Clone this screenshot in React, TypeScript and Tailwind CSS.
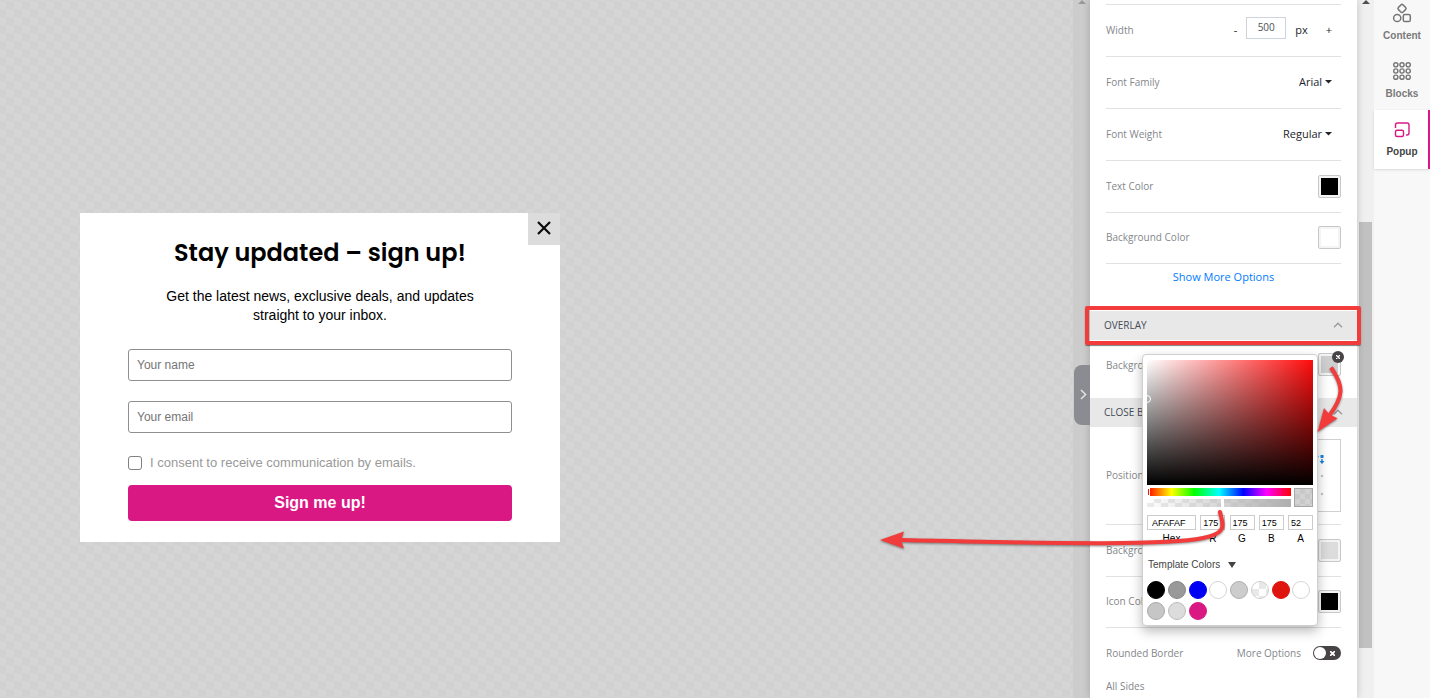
import type { ReactNode } from 'react';

const templateColors = [
  { name: 'Black', style: 'bg-black border-black' },
  { name: 'Gray', style: 'bg-[#999999] border-[#878787]' },
  { name: 'Blue', style: 'bg-[#0000f5] border-[#0000f5]' },
  { name: 'White', style: 'bg-white border-[#d5d5d5]' },
  { name: 'Light gray', style: 'bg-[#cccccc] border-[#b0b0b0]' },
  {
    name: 'Transparent',
    style:
      'bg-white bg-[repeating-conic-gradient(#e8e8e8_0_25%,#ffffff_0_50%)] bg-[length:14px_14px] border-[#cfcfcf]',
  },
  { name: 'Red', style: 'bg-[#e0140f] border-[#e0140f]' },
  { name: 'White 2', style: 'bg-white border-[#d5d5d5]' },
  { name: 'Silver', style: 'bg-[#c6c6c6] border-[#aaaaaa]' },
  { name: 'Pale gray', style: 'bg-[#dcdcdc] border-[#bcbcbc]' },
  { name: 'Pink', style: 'bg-[#da1884] border-[#da1884]' },
];

const channels = [
  { id: 'r', label: 'R', value: '175' },
  { id: 'g', label: 'G', value: '175' },
  { id: 'b', label: 'B', value: '175' },
  { id: 'a', label: 'A', value: '52' },
];

function Row({ label, height = 'h-[52px]', children }: { label: string; height?: string; children?: ReactNode }) {
  return (
    <div className={`mx-4 flex items-center justify-between border-b border-[#dfe1e3] pb-px ${height}`}>
      <span className="pb-px text-[#84878b]">{label}</span>
      {children}
    </div>
  );
}

function Swatch({ label, color }: { label: string; color: string }) {
  return (
    <button
      type="button"
      aria-label={label}
      className="size-[23px] rounded-xs border border-[#c8c8c8] bg-[#f4f4f4] p-[2px]"
    >
      <span className={`block size-full ${color}`} />
    </button>
  );
}

function Chevron() {
  return (
    <svg width="10" height="6" viewBox="0 0 10 6" fill="none" stroke="#96989c" strokeWidth="1.3">
      <path d="M1 5.2 5 1.2l4 4" />
    </svg>
  );
}

function SectionHeader({ title, children }: { title: string; children?: ReactNode }) {
  return (
    <div className="relative">
      <button
        type="button"
        className="flex h-[29px] w-full items-center justify-between bg-[#e8e8e8] pr-[14px] pb-[2px] pl-[14px] text-[#454b57]"
      >
        {title}
        <Chevron />
      </button>
      {children}
    </div>
  );
}

function Dropdown({ label, value, width }: { label: string; value: string; width: string }) {
  return (
    <div className="relative mr-[9px] flex items-center pb-px">
      <select aria-label={label} className={`appearance-none bg-transparent text-[11px] text-[#212529] ${width}`}>
        <option>{value}</option>
      </select>
      <svg className="pointer-events-none absolute right-0" width="7" height="4" viewBox="0 0 7 4" fill="#212529">
        <path d="M0 0h7L3.5 3.6z" />
      </svg>
    </div>
  );
}

function ColorPicker() {
  return (
    <div className="absolute top-[14px] right-[39px] z-10 w-[176px] rounded-sm border border-[#cfcfcf] bg-white px-1 pt-[5px] pb-[5px] font-['Liberation_Sans',Arial,sans-serif] text-black shadow-[0_5px_12px_rgba(0,0,0,0.28)]">
      <div className="relative h-[125px] overflow-hidden bg-[linear-gradient(to_top,#000,transparent),linear-gradient(to_right,#fff,#ff0c0c)]">
        <span className="absolute top-[35px] -left-1 size-[8px] rounded-full border border-white" />
      </div>
      <div className="mt-[3px] flex gap-[3px]">
        <div className="flex flex-1 flex-col gap-[3px]">
          <div className="h-2 bg-[linear-gradient(to_right,#f00,#ff0_17%,#0f0_33%,#0ff_50%,#00f_67%,#f0f_83%,#f00)]">
            <span className="block h-full w-[3px] border border-white" />
          </div>
          <div className="relative h-2 bg-[linear-gradient(to_right,transparent,#afafaf),repeating-conic-gradient(#ebebeb_0_25%,#ffffff_0_50%)] bg-[length:100%_100%,14px_8px]">
            <span className="absolute left-1/2 h-full w-[3px] translate-x-0.5 bg-white" />
          </div>
        </div>
        <span className="size-[19px] border border-[#a6a6a6] bg-[repeating-conic-gradient(#c8c8c8_0_25%,#d2d2d2_0_50%)] bg-[length:10px_10px]" />
      </div>
      <div className="mt-2 flex justify-between text-[10px]">
        <div className="w-[49px]">
          <input
            id="hex"
            defaultValue="AFAFAF"
            className="block h-[15px] w-full border border-[#cccccc] pl-1 text-[9px] outline-none"
          />
          <label htmlFor="hex" className="block pt-px text-center leading-[16px]">
            Hex
          </label>
        </div>
        {channels.map((channel) => (
          <div key={channel.id} className="w-[25px]">
            <input
              id={channel.id}
              defaultValue={channel.value}
              className="block h-[15px] w-full border border-[#cccccc] pl-[2px] text-[9px] outline-none"
            />
            <label htmlFor={channel.id} className="block pt-px text-center leading-[16px]">
              {channel.label}
            </label>
          </div>
        ))}
      </div>
      <button type="button" className="mt-[10px] flex h-4 items-center gap-[8px] pl-px text-[10px] text-[#444444]">
        Template Colors
        <svg width="8" height="6" viewBox="0 0 8 6" fill="#444">
          <path d="M0 0h8L4 6z" />
        </svg>
      </button>
      <div className="mt-2 grid grid-cols-8 gap-y-[3px]">
        {templateColors.map((color) => (
          <button
            key={color.name}
            type="button"
            aria-label={color.name}
            className={`size-[18px] rounded-full border ${color.style}`}
          />
        ))}
      </div>
    </div>
  );
}

function PositionGrid() {
  return (
    <button type="button" aria-label="Close button position" className="size-[73px] border border-[#d0d0d0]">
      <svg viewBox="0 0 71 71" fill="#c8c8c8">
        <circle cx="17" cy="19" r="1.3" />
        <circle cx="35" cy="19" r="1.3" />
        <circle cx="17" cy="36" r="1.3" />
        <circle cx="35" cy="36" r="1.3" />
        <circle cx="53" cy="36" r="1.3" />
        <circle cx="17" cy="54" r="1.3" />
        <circle cx="35" cy="54" r="1.3" />
        <circle cx="53" cy="54" r="1.3" />
        <g fill="#1683e0">
          <path d="M51.5 15h3v3h-3zM52.3 19h1.4v2h1.8L53 24l-2.5-3h1.8zM49.5 15.8v1.4h-2v1.6l-3-2.3 3-2.3v1.6z" />
        </g>
      </svg>
    </button>
  );
}

function SettingsPanel() {
  return (
    <aside className="relative z-10 w-[267px] shrink-0 bg-white font-['Open_Sans','Noto_Sans',sans-serif] text-[10px] leading-[16px] font-medium shadow-[0_0_8px_rgba(0,0,0,0.2)]">
      <button
        type="button"
        aria-label="Collapse panel"
        className="absolute top-[365px] -left-4 flex h-[60px] w-4 items-center justify-center rounded-l-lg bg-[#8b8c92] pb-0.5 pl-0.5"
      >
        <svg width="7" height="11" viewBox="0 0 7 11" fill="none" stroke="#e4e4e4" strokeWidth="1.5">
          <path d="m1 1 4.6 4.5L1 10" />
        </svg>
      </button>

      <div className="mx-4 h-[5px] border-b border-[#dfe1e3]" />
      <Row label="Width">
        <div className="mr-[9px] flex items-center pb-px text-[11px] text-[#212529]">
          <button type="button" aria-label="Decrease width">-</button>
          <input
            aria-label="Width"
            defaultValue="500"
            className="mr-[9px] mb-1 ml-[9px] h-[22px] w-10 border border-[#ced4da] pb-0.5 text-center text-[10px] text-[#495057] outline-none"
          />
          <span>px</span>
          <button type="button" aria-label="Increase width" className="ml-[18px]">+</button>
        </div>
      </Row>
      <Row label="Font Family">
        <Dropdown label="Font Family" value="Arial" width="w-[33px]" />
      </Row>
      <Row label="Font Weight">
        <Dropdown label="Font Weight" value="Regular" width="w-[49px]" />
      </Row>
      <Row label="Text Color">
        <Swatch label="Text Color" color="bg-black" />
      </Row>
      <Row label="Background Color" height="h-[51px]">
        <Swatch label="Background Color" color="bg-white" />
      </Row>
      <div className="flex h-[47px] justify-center pt-[5px]">
        <a href="#" className="text-[11px] text-[#007bff]">Show More Options</a>
      </div>

      <SectionHeader title="OVERLAY">
        <div className="pointer-events-none absolute -top-[5px] -right-1 -bottom-[5px] -left-[5px] rounded-xs border-4 border-[#f23c3c] shadow-[0_1px_1px_rgba(0,0,0,0.5)]" />
      </SectionHeader>
      <div className="relative flex h-[58px] items-center justify-between px-4 pb-[9px]">
        <span className="text-[#84878b]">Background Color</span>
        <div className="relative flex">
          <Swatch label="Overlay background color" color="bg-[#cfcfcf]" />
          <button
            type="button"
            aria-label="Clear color"
            className="absolute -top-[2px] -right-[3px] flex size-3 items-center justify-center rounded-full bg-[#484446]"
          >
            <svg width="4" height="4" viewBox="0 0 4 4" stroke="#fff" strokeWidth="1.3">
              <path d="M0 0l4 4M4 0 0 4" />
            </svg>
          </button>
        </div>
        <ColorPicker />
      </div>

      <SectionHeader title="CLOSE BUTTON" />
      <Row label="Position" height="h-[98px]">
        <PositionGrid />
      </Row>
      <Row label="Background Color">
        <Swatch label="Close button background color" color="bg-[#dcdcdc]" />
      </Row>
      <Row label="Icon Color" height="h-[51px]">
        <Swatch label="Icon Color" color="bg-black" />
      </Row>
      <div className="mx-4 flex h-[50px] items-center text-[#84878b]">
        <span className="flex-1">Rounded Border</span>
        <label htmlFor="more-options" className="mr-3">More Options</label>
        <span className="relative flex h-[14px] w-7 items-center rounded-full bg-[#484446] px-px">
          <input id="more-options" type="checkbox" className="absolute inset-0 appearance-none" />
          <span className="size-3 rounded-full bg-white" />
          <svg className="ml-1" width="5" height="5" viewBox="0 0 5 5" stroke="#fff" strokeWidth="1.7">
            <path d="M0 0l5 5M5 0 0 5" />
          </svg>
        </span>
      </div>
      <div className="mx-4 text-[#84878b]">All Sides</div>
    </aside>
  );
}

function SignupPopup() {
  return (
    <form className="relative w-[480px] bg-white px-12 pt-6 pb-[21px] font-['Liberation_Sans',Arial,sans-serif]">
      <button
        type="button"
        aria-label="Close"
        className="absolute top-0 right-0 flex size-8 items-center justify-center bg-[#dcdcdc] pb-0.5"
      >
        <svg width="14" height="14" viewBox="0 0 14 14" stroke="#0a0a0a" strokeWidth="2.2">
          <path d="M1 1l12 12M13 1 1 13" />
        </svg>
      </button>
      <h2 className="text-center font-['Poppins','Inter',sans-serif] text-[24px] leading-8 font-semibold text-black">
        Stay updated – sign up!
      </h2>
      <p className="mx-auto mt-[18px] w-[310px] text-center text-[14px] leading-[19px] text-black">
        Get the latest news, exclusive deals, and updates straight to your inbox.
      </p>
      <input
        aria-label="Your name"
        placeholder="Your name"
        className="mt-6 block h-8 w-full rounded-[3px] border border-[#8f8f8f] px-2 text-[12px] placeholder:text-[#757575]"
      />
      <input
        aria-label="Your email"
        placeholder="Your email"
        className="mt-5 block h-8 w-full rounded-[3px] border border-[#8f8f8f] px-2 text-[12px] placeholder:text-[#757575]"
      />
      <label className="mt-[22px] flex h-4 items-center gap-2 text-[13px] text-[#999999]">
        <input type="checkbox" className="size-[14px] appearance-none rounded-[3px] border border-[#808080] bg-white" />
        I consent to receive communication by emails.
      </label>
      <button type="button" className="mt-[14px] h-9 w-full rounded-sm bg-[#da1884] text-[16px] font-bold text-white">
        Sign me up!
      </button>
    </form>
  );
}

function RailItem({ label, active, children }: { label: string; active?: boolean; children: ReactNode }) {
  return (
    <button
      type="button"
      className={`flex w-full flex-col items-center gap-[5px] border-r-2 pt-2 pl-0.5 text-[10px] leading-[14px] font-bold ${
        active ? 'h-[59px] border-[#da1884] bg-white text-[#444444] shadow-sm' : 'h-[58px] border-transparent text-[#7a7a7a]'
      }`}
    >
      {children}
      {label}
    </button>
  );
}

function ToolRail() {
  return (
    <nav className="w-14 shrink-0 bg-[#f8f8f8] font-['Liberation_Sans',Arial,sans-serif]">
      {/* The list is scrolled slightly, so the first item is cut at the top */}
      <div className="-mt-[6px]">
        <RailItem label="Content">
          <svg className="size-[22px]" viewBox="0 0 22 22" fill="none" stroke="#767676" strokeWidth="1.5">
            <rect x="7.7" y="3.2" width="6.6" height="6.6" rx="1.6" transform="rotate(45 11 6.5)" />
            <circle cx="6.2" cy="16" r="3.6" />
            <rect x="12.3" y="12.5" width="7" height="7" rx="1.6" />
          </svg>
        </RailItem>
        <RailItem label="Blocks">
          <svg className="size-[22px]" viewBox="0 0 22 22" fill="none" stroke="#767676" strokeWidth="1.4">
            <circle cx="4.8" cy="4.8" r="2.1" />
            <circle cx="11" cy="4.8" r="2.1" />
            <circle cx="17.2" cy="4.8" r="2.1" />
            <circle cx="4.8" cy="11" r="2.1" />
            <circle cx="11" cy="11" r="2.1" />
            <circle cx="17.2" cy="11" r="2.1" />
            <circle cx="4.8" cy="17.2" r="2.1" />
            <circle cx="11" cy="17.2" r="2.1" />
            <circle cx="17.2" cy="17.2" r="2.1" />
          </svg>
        </RailItem>
        <RailItem label="Popup" active>
          <svg className="size-[22px]" viewBox="0 0 22 22" fill="none" stroke="#da1884" strokeWidth="1.4">
            <path d="M4.5 10V7a2 2 0 0 1 2-2h9.500a2 2 0 0 1 2 2v8a2 2 0 0 1-2 2h-1" />
            <rect x="4.500" y="12.300" width="8" height="6.200" rx="1.500" />
          </svg>
        </RailItem>
      </div>
    </nav>
  );
}

function Annotations() {
  return (
    <svg
      className="pointer-events-none absolute top-0 right-0 z-20 h-[698px] w-[560px] drop-shadow-[0_1px_1px_rgba(0,0,0,0.45)]"
      viewBox="870 0 560 698"
      fill="none"
      stroke="#f23c3c"
      strokeWidth="4"
    >
      <path d="M1331 367.500C1344 386 1344 396 1329 416" />
      <path d="M1317.500 432 1324 408l5.500 6.500 8 3.800z" fill="#f23c3c" stroke="none" />
      <path d="M1220 512c3 13 8 21-17 26-34 7-129 6-301 2" strokeLinecap="round" />
      <path d="M880 540l24-8.500-3 8.800 3 8.200z" fill="#f23c3c" stroke="none" />
    </svg>
  );
}

export default function App() {
  return (
    <div className="relative flex h-screen overflow-hidden">
      <main className="flex flex-1 bg-[repeating-conic-gradient(#d5d5d5_0_25%,#d1d1d1_0_50%)] bg-[length:16px_16px] bg-[position:6px_1px]">
        <div className="flex-1 pt-[213px] pl-20">
          <SignupPopup />
        </div>
        <div className="flex w-[17px] justify-center bg-[#cccccc]">
          <svg width="8" height="4" viewBox="0 0 8 4" fill="#999">
            <path d="M4 0l4 4H0z" />
          </svg>
        </div>
      </main>
      <SettingsPanel />
      <div className="flex w-[17px] shrink-0 flex-col items-center bg-[#f0f0f0]">
        <svg width="8" height="4" viewBox="0 0 8 4" fill="#505050">
          <path d="M4 0l4 4H0z" />
        </svg>
        <div className="mt-[218px] h-[426px] w-[13px] bg-[#c1c1c1]" />
      </div>
      <ToolRail />
      <Annotations />
    </div>
  );
}
